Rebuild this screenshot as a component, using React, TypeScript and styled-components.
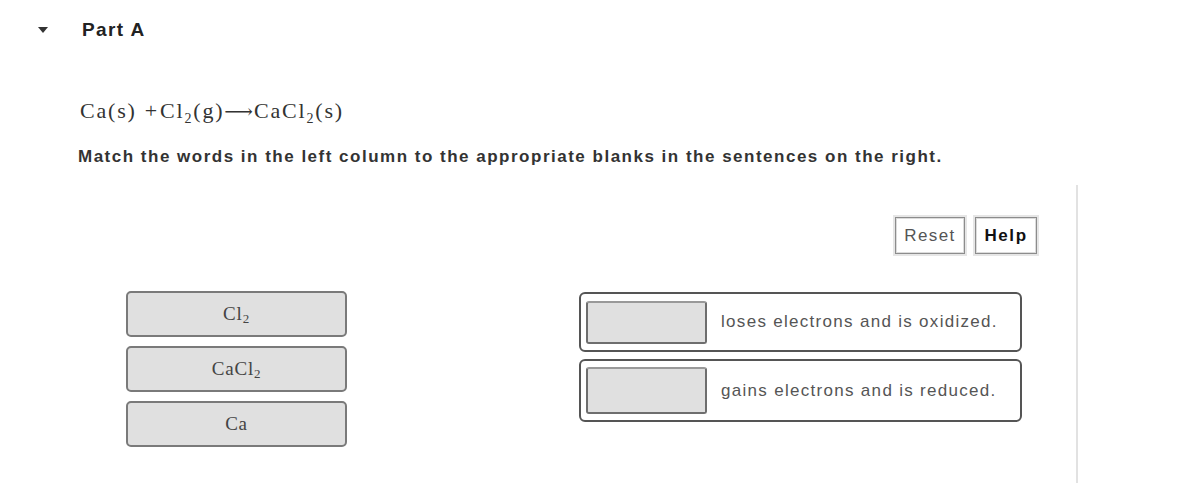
import React from "react";
import styled, { createGlobalStyle } from "styled-components";

const GlobalStyle = createGlobalStyle`
    html, body {
        margin: 0;
        padding: 0;
        background: #ffffff;
        font-family: "Liberation Sans", Arial, sans-serif;
        color: #333333;
    }
`;

//#region header

const Header = styled.div`
    display: flex;
    align-items: center;
    height: 24px;
    padding: 18px 0 0 38px;
`;

const Caret = styled.span`
    width: 0;
    height: 0;
    border-left: 5px solid transparent;
    border-right: 5px solid transparent;
    border-top: 6px solid #333;
    margin-right: 34px;
`;

const PartTitle = styled.h2`
    margin: 0;
    font-size: 19px;
    font-weight: bold;
    letter-spacing: 1.4px;
    color: #222;
`;

//#endregion

//#region body

const Body = styled.div`
    padding-left: 78px;
`;

const Equation = styled.div`
    margin: 56px 0 0 2px;
    font-family: "Liberation Serif", "Times New Roman", serif;
    font-size: 22px;
    line-height: 26px;
    letter-spacing: 1.8px;
    color: #333;
    sub {
        font-size: 14px;
        vertical-align: -5px;
        line-height: 0;
    }
`;

const Op = styled.span<{ arrow?: boolean }>`
    margin: ${p => (p.arrow ? "0 1px 0 0" : "0 3px 0 8px")};
    font-family: ${p => (p.arrow ? '"DejaVu Serif", serif' : "inherit")};
    font-size: ${p => (p.arrow ? 20 : 22)}px;
    letter-spacing: 0;
`;

const Instructions = styled.p`
    margin: 23px 0 0 0;
    font-size: 17px;
    font-weight: bold;
    letter-spacing: 1.5px;
    line-height: 20px;
    color: #333;
`;

const Panel = styled.div`
    margin-top: 18px;
    width: 1000px;
    min-height: 298px;
    border-right: 2px solid #e2e2e2;
    box-sizing: border-box;
    padding-top: 32px;
`;

const Toolbar = styled.div`
    display: flex;
    justify-content: flex-end;
    gap: 10px;
    padding-right: 39px;
`;

const ToolButton = styled.button<{ strong?: boolean }>`
    height: 37px;
    padding: 0 4px;
    min-width: ${p => (p.strong ? 62 : 70)}px;
    background: #fff;
    border: 1px solid #8c8c8c;
    box-shadow: 0 0 0 2px #e6e6e6, inset 0 0 0 1px #dcdcdc;
    font-family: "Liberation Sans", Arial, sans-serif;
    font-size: 17px;
    font-weight: ${p => (p.strong ? "bold" : "normal")};
    color: ${p => (p.strong ? "#111" : "#555")};
    letter-spacing: ${p => (p.strong ? 1.6 : 1.4)}px;
`;

const MatchArea = styled.div`
    display: flex;
    align-items: flex-start;
    margin-top: 37px;
    padding-left: 48px;
    padding-right: 54px;
`;

const SourceColumn = styled.div`
    display: flex;
    flex-direction: column;
    gap: 9px;
    width: 221px;
`;

const Chip = styled.div`
    height: 46px;
    box-sizing: border-box;
    display: flex;
    align-items: center;
    justify-content: center;
    background: #e0e0e0;
    border: 2px solid #7a7a7a;
    border-radius: 5px;
    font-family: "Liberation Serif", "Times New Roman", serif;
    font-size: 19px;
    letter-spacing: 0.8px;
    color: #444;
    sub {
        font-size: 13px;
        position: relative;
        top: 5px;
        vertical-align: baseline;
        line-height: 0;
    }
`;

const TargetColumn = styled.div`
    display: flex;
    flex-direction: column;
    gap: 7px;
    width: 443px;
    margin-left: auto;
    margin-top: 1px;
`;

const Sentence = styled.div<{ tall?: boolean }>`
    display: flex;
    align-items: center;
    height: ${p => (p.tall ? 63 : 60)}px;
    box-sizing: border-box;
    padding-left: 5px;
    border: 2px solid #555;
    border-radius: 6px;
    background: #fff;
`;

const Blank = styled.div<{ tall?: boolean }>`
    width: 121px;
    height: ${p => (p.tall ? 47 : 43)}px;
    box-sizing: border-box;
    background: #e0e0e0;
    border: 2px solid #6e6e6e;
    border-top-color: #999;
    border-radius: 3px;
    margin-right: 14px;
`;

const SentenceText = styled.span`
    font-size: 17px;
    color: #555;
    letter-spacing: 1.3px;
`;

//#endregion

const chips = [
    <>Cl<sub>2</sub></>,
    <>CaCl<sub>2</sub></>,
    <>Ca</>,
];

const sentences = [
    "loses electrons and is oxidized.",
    "gains electrons and is reduced.",
];

export default function App() {
    return (
        <>
            <GlobalStyle />
            <Header>
                <Caret />
                <PartTitle>Part A</PartTitle>
            </Header>
            <Body>
                <Equation>
                    Ca(s)<Op>+</Op>Cl<sub>2</sub>(g)<Op arrow>&#x27F6;</Op>CaCl<sub>2</sub>(s)
                </Equation>
                <Instructions>
                    Match the words in the left column to the appropriate blanks in the sentences on the right.
                </Instructions>
                <Panel>
                    <Toolbar>
                        <ToolButton>Reset</ToolButton>
                        <ToolButton strong>Help</ToolButton>
                    </Toolbar>
                    <MatchArea>
                        <SourceColumn>
                            {chips.map((c, i) => <Chip key={i}>{c}</Chip>)}
                        </SourceColumn>
                        <TargetColumn>
                            {sentences.map((s, i) => (
                                <Sentence key={i} tall={i === 1}>
                                    <Blank tall={i === 1} />
                                    <SentenceText>{s}</SentenceText>
                                </Sentence>
                            ))}
                        </TargetColumn>
                    </MatchArea>
                </Panel>
            </Body>
        </>
    );
}
